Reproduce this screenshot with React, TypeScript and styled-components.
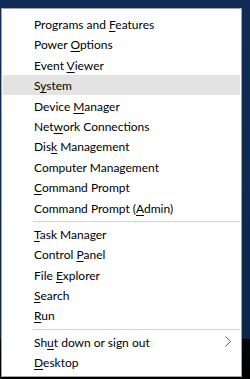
import React from 'react';
import styled, { createGlobalStyle } from 'styled-components';

const GlobalStyle = createGlobalStyle`
  html, body {
    margin: 0;
    padding: 0;
    width: 250px;
    height: 379px;
    overflow: hidden;
  }
  body {
    background: linear-gradient(to bottom, #112c57 0px, #0d2648 339px, #03070d 339px, #000 379px);
    font-family: Lato, 'Noto Sans', sans-serif;
  }
`;

const Screen = styled.div`
  padding: 8px 0 0 1px;
  height: 379px;
  box-sizing: border-box;
`;

const Menu = styled.div`
  width: 241px;
  box-sizing: border-box;
  background: #fff;
  border: 1px solid #a3a3a3;
  padding: 4.8px 0 3.4px;
`;

const Item = styled.div<{ $hot?: boolean }>`
  display: flex;
  align-items: center;
  justify-content: space-between;
  height: 20.4px;
  margin: 0 1px;
  padding: 0 9px 0 31px;
  background: ${({ $hot }) => ($hot ? '#e3e3e3' : 'transparent')};
  color: #000;
  font-size: 12px;
  white-space: nowrap;
  cursor: default;

  span {
    padding-top: 1px;
  }

  u {
    text-decoration-thickness: 1px;
    text-underline-offset: 1.5px;
  }
`;

const Separator = styled.div`
  height: 1px;
  margin: 3px 1px 2px 31px;
  background: #d2d2d2;
`;

const Chevron = () => (
  <svg width="6" height="11" viewBox="0 0 6 11" fill="none">
    <polyline points="0.5,0.5 5.5,5.5 0.5,10.5" stroke="#5a5a7a" strokeWidth="1" />
  </svg>
);

type Entry = { label: string; hot?: boolean; sub?: boolean };

const groups: Entry[][] = [
  [
    { label: 'Programs and &Features' },
    { label: 'Power &Options' },
    { label: 'Event &Viewer' },
    { label: 'S&ystem', hot: true },
    { label: 'Device &Manager' },
    { label: 'Net&work Connections' },
    { label: 'Dis&k Management' },
    { label: 'Computer Management' },
    { label: '&Command Prompt' },
    { label: 'Command Prompt (&Admin)' },
  ],
  [
    { label: '&Task Manager' },
    { label: 'Control &Panel' },
    { label: 'File &Explorer' },
    { label: '&Search' },
    { label: '&Run' },
  ],
  [{ label: 'Sh&ut down or sign out', sub: true }, { label: '&Desktop' }],
];

// "&" marks the access key, as in Windows menu resources
const Label = ({ text }: { text: string }) => {
  const i = text.indexOf('&');
  if (i < 0) return <span>{text}</span>;
  return (
    <span>
      {text.slice(0, i)}
      <u>{text[i + 1]}</u>
      {text.slice(i + 2)}
    </span>
  );
};

export default function App() {
  return (
    <>
      <GlobalStyle />
      <Screen>
        <Menu>
          {groups.map((group, g) => (
            <React.Fragment key={g}>
              {g > 0 && <Separator />}
              {group.map((entry) => (
                <Item key={entry.label} $hot={entry.hot}>
                  <Label text={entry.label} />
                  {entry.sub && <Chevron />}
                </Item>
              ))}
            </React.Fragment>
          ))}
        </Menu>
      </Screen>
    </>
  );
}
